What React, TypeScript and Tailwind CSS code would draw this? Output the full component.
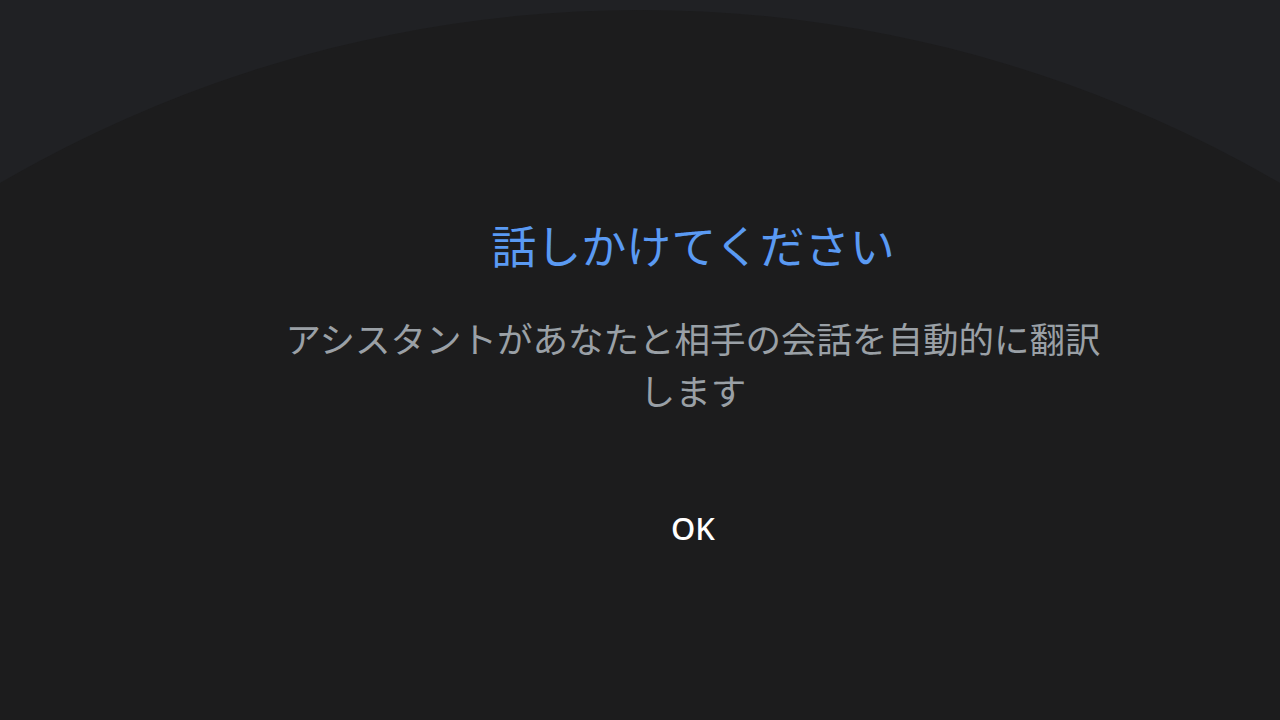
export default function App() {
  return (
    <div className="relative h-[720px] w-[1280px] overflow-hidden bg-[#202124] font-['Noto_Sans_CJK_JP','Noto_Sans',sans-serif]">
      {/* big rounded sheet behind the dialog */}
      <div className="absolute left-[-630px] top-[10px] h-[2540px] w-[2540px] rounded-full bg-[#1c1c1d]" />

      <div className="relative flex h-full flex-col items-center pl-[106px] pt-[216px]">
        <h1 className="text-[45px] leading-[58px] font-normal text-[#5a9af3]">話しかけてください</h1>
        <p className="mt-[38px] text-center text-[35.5px] leading-[52px] text-[#9aa0a6]">
          アシスタントがあなたと相手の会話を自動的に翻訳
          <br />
          します
        </p>
        <button className="mt-[92px] font-['Noto_Sans',sans-serif] text-[31px] font-medium leading-[40px] text-white">
          OK
        </button>
      </div>
    </div>
  );
}
